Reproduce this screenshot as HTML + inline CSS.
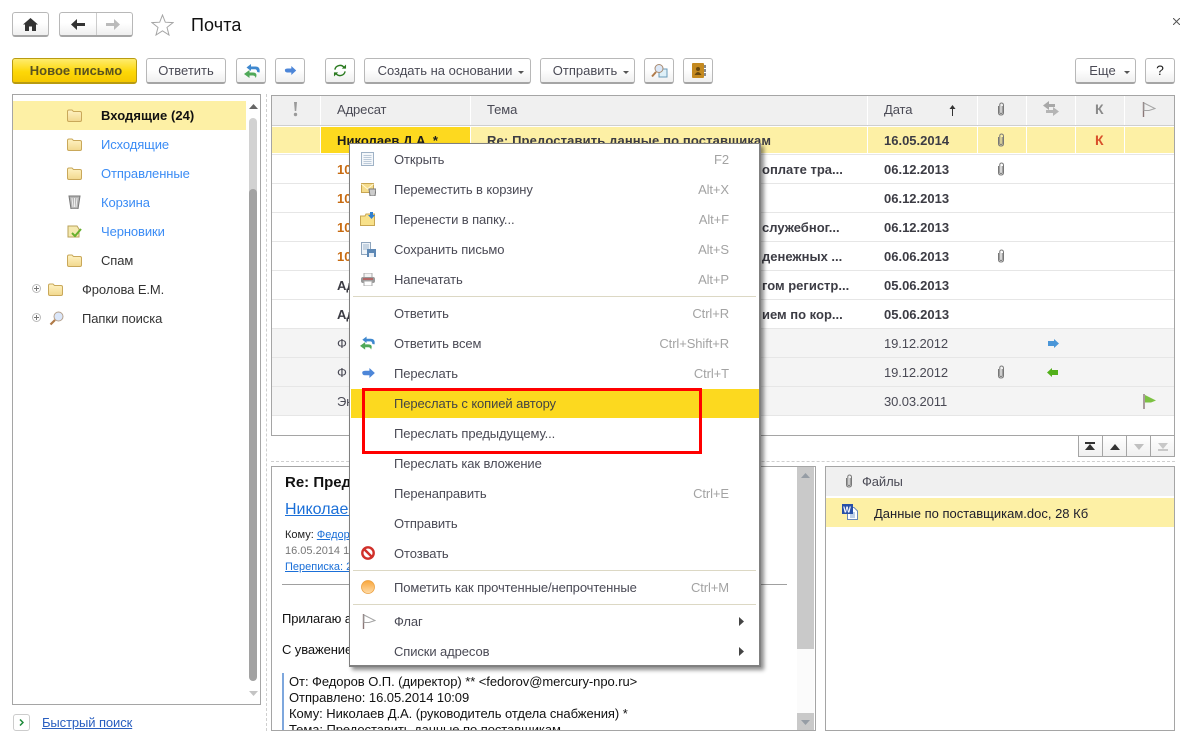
<!DOCTYPE html>
<html lang="ru"><head><meta charset="utf-8"><title>Почта</title>
<style>
html,body{margin:0;padding:0;background:#fff}
body{position:relative;width:1194px;height:743px;overflow:hidden;font:13px/16px "Liberation Sans",Arial,sans-serif;color:#4a4a55}
.a,.t{position:absolute}
.t{white-space:nowrap;letter-spacing:-.1px;margin-top:1px}
.b{position:absolute;box-sizing:border-box;height:26px;border:1px solid #b8b8b8;border-bottom:2px solid #a5a5a5;border-radius:3px;background:linear-gradient(#fff 0,#fff 45%,#efefef 100%);text-align:center;line-height:23px;white-space:nowrap}
.b svg{position:absolute;left:6px;top:3px}
.dd{position:absolute;width:0;height:0;border:3px solid transparent;border-top:3px solid #555;border-bottom:0}
.hc{position:absolute;top:96px;height:29px;background:#f0f0f0}
.r1{position:absolute;top:127px;height:26px;background:#fdf0a5}
.rl{position:absolute;left:272px;width:902px;height:1px;background:#e6e6e6}
.g{position:absolute;left:272px;width:902px;height:28px;background:#f4f4f4}
.d{font-weight:bold;color:#3c3c44;letter-spacing:0}
.o{font-weight:bold;color:#c76a10;letter-spacing:0}
.m{position:absolute;left:394px}
.s{position:absolute;right:465px;color:#a3a3a3}
.sep{position:absolute;left:353px;width:403px;height:1px;background:#dcd8c4}
.lnk{color:#1a6fd8;text-decoration:underline}
.ic{position:absolute}
</style></head><body>
<svg width="0" height="0" style="position:absolute">
<defs>
<linearGradient id="fg" x1="0" y1="0" x2="0" y2="1"><stop offset="0" stop-color="#fff3c4"/><stop offset="1" stop-color="#f2d88e"/></linearGradient>
<linearGradient id="og" x1="0" y1="0" x2="0" y2="1"><stop offset="0" stop-color="#f8a53a"/><stop offset="1" stop-color="#ffdca8"/></linearGradient>
<symbol id="folder" viewBox="0 0 15 13"><path d="M.5 2.500Q.5 1 2 1H5L6.500 2.500H13Q14.500 2.500 14.500 4V11Q14.500 12.500 13 12.500H2Q.5 12.500 .5 11Z" fill="url(#fg)" stroke="#c9a85a"/></symbol>
<symbol id="clip" viewBox="0 0 8 14"><path d="M1.500 4V10.500Q1.500 13 4 13T6.500 10.500V3.500Q6.500 1 4.500 1T2.800 3.500V10.500Q2.800 11.500 4 11.500T5.200 10.500V4" fill="none" stroke="#777" stroke-width="1"/></symbol>
<symbol id="replyall" viewBox="0 0 16 14"><path d="M7 0L2.500 3.500 7 7V5.200H11Q13 5.200 13.200 8L15.500 8.500Q16.500 2.500 11.500 2.500H7Z" fill="#3f88cf"/><path d="M5.500 6L0 10 5.500 14V11.500H9Q11 11.500 11.800 14 14 8.500 9 8.500H5.500Z" fill="#4fa858"/></symbol>
<symbol id="fwd" viewBox="0 0 14 11"><path d="M8 0L14 5.500 8 11V8H3Q0 8 0 4.500 1 3 3.500 3H8Z" fill="#4d86d8"/></symbol>
<symbol id="flag" viewBox="0 0 14 15"><path d="M1.500 0V15" stroke="#8b7777" stroke-width="1.400"/><path d="M2 1L13 6.500 7 8.500H2Z" fill="none" stroke="#a5a5a5"/></symbol>
</defs>
</svg>

<!-- top bar -->
<div class="b" style="left:12px;top:12px;width:37px;height:25px"></div>
<svg class="ic" style="left:23px;top:18px" width="15" height="13" viewBox="0 0 15 13"><path d="M7.500 0L15 6.500H13V13H9V8.500H6V13H2V6.500H0Z" fill="#333"/></svg>
<div class="b" style="left:59px;top:12px;width:74px;height:25px"></div>
<div class="a" style="left:96px;top:13px;width:1px;height:22px;background:#ccc"></div>
<svg class="ic" style="left:71px;top:19px" width="14" height="11" viewBox="0 0 14 11"><path d="M6 0L0 5.500 6 11V7H14V4H6Z" fill="#333"/></svg>
<svg class="ic" style="left:106px;top:19px" width="14" height="11" viewBox="0 0 14 11"><path d="M8 0L14 5.500 8 11V7H0V4H8Z" fill="#bbb"/></svg>
<svg class="ic" style="left:151px;top:14px" width="23" height="22" viewBox="0 0 23 22"><path d="M11.500 1L14.300 8.200 22 8.600 16 13.400 18 21 11.500 16.800 5 21 7 13.400 1 8.600 8.700 8.200Z" fill="none" stroke="#a5a5a5" stroke-width="1"/></svg>
<div class="t" style="left:191px;top:13px;font-size:18px;line-height:22px;color:#111;letter-spacing:.1px">Почта</div>
<svg class="ic" style="left:1173px;top:18px" width="7" height="7" viewBox="0 0 7 7"><path d="M0 0L7 7M7 0L0 7" stroke="#555" stroke-width="1"/></svg>

<!-- toolbar -->
<div class="b" style="left:12px;top:58px;width:125px;padding-left:3px;border-color:#b89b12;background:linear-gradient(#ffec6e,#fdd808 55%,#f5c800);font-weight:bold;color:#5a5220">Новое письмо</div>
<div class="b" style="left:146px;top:58px;width:80px">Ответить</div>
<div class="b" style="left:236px;top:58px;width:30px"><svg style="left:7px;top:5px" width="16" height="14"><use href="#replyall"/></svg></div>
<div class="b" style="left:275px;top:58px;width:30px"><svg style="left:8px;top:7px" width="13" height="9" viewBox="0 0 14 11"><use href="#fwd"/></svg></div>
<div class="b" style="left:325px;top:58px;width:30px"><svg style="left:7px;top:5px" width="14" height="13" viewBox="0 0 15 14"><path d="M2 6A5.500 5.500 0 0 1 12 4M13 8A5.500 5.500 0 0 1 3 10" fill="none" stroke="#2a7a20" stroke-width="1.500"/><path d="M9.500 5H14V.5ZM5.500 9H1V13.500Z" fill="#2a7a20"/></svg></div>
<div class="b" style="left:364px;top:58px;width:167px;padding-right:5px">Создать на основании</div><div class="dd" style="left:518px;top:71px"></div>
<div class="b" style="left:540px;top:58px;width:95px;padding-right:5px">Отправить</div><div class="dd" style="left:623px;top:71px"></div>
<div class="b" style="left:1075px;top:58px;width:61px;padding-right:6px">Еще</div><div class="dd" style="left:1124px;top:71px"></div>
<div class="b" style="left:644px;top:58px;width:30px"><svg style="left:6px;top:4px" width="17" height="15" viewBox="0 0 17 15"><rect x="8" y="6" width="8" height="8" fill="#dff0f8" stroke="#6a9ab8"/><circle cx="8" cy="5.500" r="4" fill="#dbe8f8" stroke="#a88a70"/><path d="M5 9L1 13.500" stroke="#b07a48" stroke-width="2"/></svg></div>
<div class="b" style="left:683px;top:58px;width:30px"><svg style="left:7px;top:4px" width="15" height="15" viewBox="0 0 15 15"><rect x="1" y="0" width="12" height="15" rx="1" fill="#c58a20"/><rect x="13" y="2" width="2" height="3" fill="#888"/><rect x="13" y="6" width="2" height="3" fill="#888"/><rect x="13" y="10" width="2" height="3" fill="#888"/><circle cx="7" cy="6" r="2" fill="#6a4a10"/><path d="M3.500 12Q7 6 10.500 12Z" fill="#6a4a10"/></svg></div>
<div class="b" style="left:1145px;top:58px;width:30px;color:#222;font-size:14px">?</div>

<!-- left panel -->
<div class="a" style="left:12px;top:94px;width:249px;height:611px;box-sizing:border-box;border:1px solid #a5a5a5"></div>
<div class="a" style="left:13px;top:101px;width:233px;height:29px;background:#fdf0a5"></div>
<svg class="ic" style="left:249px;top:104px" width="9" height="5" viewBox="0 0 9 5"><path d="M4.500 0L9 5H0Z" fill="#666"/></svg>
<div class="a" style="left:249px;top:118px;width:8px;height:80px;background:#d2d2d2;border-radius:4px"></div>
<div class="a" style="left:249px;top:189px;width:8px;height:492px;background:#a2a2a2;border-radius:4px"></div>
<svg class="ic" style="left:249px;top:691px" width="9" height="5" viewBox="0 0 9 5"><path d="M0 0H9L4.500 5Z" fill="#c4c4c4"/></svg>
<svg class="ic" style="left:67px;top:109px" width="15" height="13"><use href="#folder"/></svg>
<svg class="ic" style="left:67px;top:138px" width="15" height="13"><use href="#folder"/></svg>
<svg class="ic" style="left:67px;top:167px" width="15" height="13"><use href="#folder"/></svg>
<svg class="ic" style="left:68px;top:195px" width="13" height="14" viewBox="0 0 13 14"><path d="M1 1H12L10 14H3Z" fill="#b5b5b5" stroke="#777"/><path d="M4 3L5 12M6.500 3V12M9 3L8 12" stroke="#eee"/></svg>
<svg class="ic" style="left:67px;top:224px" width="15" height="14" viewBox="0 0 15 14"><path d="M1 2H10L12 5V13H1Z" fill="#f5e9b0" stroke="#b9a25a"/><path d="M5 9L8 12 14 5" fill="none" stroke="#67b02e" stroke-width="2"/></svg>
<svg class="ic" style="left:67px;top:254px" width="15" height="13"><use href="#folder"/></svg>
<div class="t" style="left:101px;top:107px;font-weight:bold;color:#111;letter-spacing:.05px">Входящие (24)</div>
<div class="t" style="left:101px;top:136px;color:#3b8cf5">Исходящие</div>
<div class="t" style="left:101px;top:165px;color:#3b8cf5">Отправленные</div>
<div class="t" style="left:101px;top:194px;color:#3b8cf5">Корзина</div>
<div class="t" style="left:101px;top:223px;color:#3b8cf5">Черновики</div>
<div class="t" style="left:101px;top:252px;color:#333">Спам</div>
<svg class="ic" style="left:32px;top:284px" width="9" height="9" viewBox="0 0 9 9"><circle cx="4.500" cy="4.500" r="4" fill="#fff" stroke="#bbb"/><path d="M2 4.500H7M4.500 2V7" stroke="#777"/></svg>
<svg class="ic" style="left:32px;top:313px" width="9" height="9" viewBox="0 0 9 9"><circle cx="4.500" cy="4.500" r="4" fill="#fff" stroke="#bbb"/><path d="M2 4.500H7M4.500 2V7" stroke="#777"/></svg>
<svg class="ic" style="left:48px;top:283px" width="15" height="13"><use href="#folder"/></svg>
<svg class="ic" style="left:49px;top:311px" width="15" height="15" viewBox="0 0 15 15"><circle cx="9.500" cy="5.500" r="4.500" fill="#dbe7fa" stroke="#b5a08c"/><path d="M6 9L1.500 13.500" stroke="#b07a48" stroke-width="2.200"/></svg>
<div class="t" style="left:82px;top:281px;color:#333">Фролова Е.М.</div>
<div class="t" style="left:82px;top:310px;color:#333">Папки поиска</div>
<div class="b" style="left:13px;top:714px;width:17px;height:17px;border:1px solid #ccc;border-radius:3px;background:#fff"></div>
<svg class="ic" style="left:19px;top:719px" width="5" height="7" viewBox="0 0 5 7"><path d="M1 .5L4 3.500 1 6.500" fill="none" stroke="#1d8a3a" stroke-width="1.500"/></svg>
<div class="t lnk" style="left:42px;top:714px;color:#2a5fc0">Быстрый поиск</div>

<!-- splitters -->
<div class="a" style="left:266px;top:94px;height:637px;border-left:1px dashed #cfcfcf"></div>
<div class="a" style="left:271px;top:461px;width:904px;border-top:1px dashed #cfcfcf"></div>

<!-- table -->
<div class="a" style="left:271px;top:95px;width:904px;height:341px;box-sizing:border-box;border:1px solid #a5a5a5"></div>
<div class="hc" style="left:272px;width:48px"></div>
<div class="hc" style="left:321px;width:149px"></div>
<div class="hc" style="left:471px;width:396px"></div>
<div class="hc" style="left:868px;width:109px"></div>
<div class="hc" style="left:978px;width:48px"></div>
<div class="hc" style="left:1027px;width:48px"></div>
<div class="hc" style="left:1076px;width:48px"></div>
<div class="hc" style="left:1125px;width:49px"></div>
<div class="a" style="left:272px;top:125px;width:902px;height:1px;background:#cfcfcf"></div>
<div class="r1" style="left:272px;width:48px"></div>
<div class="r1" style="left:321px;width:149px;background:#fdd91f"></div>
<div class="r1" style="left:471px;width:396px"></div>
<div class="r1" style="left:868px;width:109px"></div>
<div class="r1" style="left:978px;width:48px"></div>
<div class="r1" style="left:1027px;width:48px"></div>
<div class="r1" style="left:1076px;width:48px"></div>
<div class="r1" style="left:1125px;width:49px"></div>
<div class="g" style="top:329px"></div><div class="g" style="top:358px"></div><div class="g" style="top:387px"></div>
<div class="rl" style="top:154px"></div><div class="rl" style="top:183px"></div><div class="rl" style="top:212px"></div><div class="rl" style="top:241px"></div><div class="rl" style="top:270px"></div><div class="rl" style="top:299px"></div><div class="rl" style="top:328px"></div><div class="rl" style="top:357px"></div><div class="rl" style="top:386px"></div><div class="rl" style="top:415px"></div>

<div class="t" style="left:337px;top:101px">Адресат</div>
<div class="t" style="left:487px;top:101px">Тема</div>
<div class="t" style="left:884px;top:101px">Дата</div>
<svg class="ic" style="left:293px;top:102px" width="5" height="15" viewBox="0 0 5 15"><path d="M1 0H4L3.200 9H1.800Z" fill="#9a9a9a"/><circle cx="2.500" cy="12.500" r="1.700" fill="#9a9a9a"/></svg>
<svg class="ic" style="left:949px;top:105px" width="7" height="11" viewBox="0 0 7 11"><path d="M3.500 11V2" stroke="#333"/><path d="M3.500 0L6.500 4H.5Z" fill="#333"/></svg>
<svg class="ic" style="left:997px;top:102px" width="8" height="14"><use href="#clip"/></svg>
<svg class="ic" style="left:1043px;top:101px" width="16" height="15" viewBox="0 0 16 15"><path d="M6 0V3H12V6H6V9L0 4.500Z" fill="#a8a8a8"/><path d="M10 6V9H3V12H10V15L16 10.500Z" fill="#b5b5b5"/></svg>
<div class="t" style="left:1095px;top:100px;font-weight:bold;font-size:14px;color:#8a8a8a">К</div>
<svg class="ic" style="left:1142px;top:102px" width="14" height="15"><use href="#flag"/></svg>

<div class="t" style="left:337px;top:132px;font-weight:bold;color:#1c1c1c;letter-spacing:.05px">Николаев Д.А. *</div>
<div class="t d" style="left:487px;top:132px;letter-spacing:.13px">Re: Предоставить данные по поставщикам</div>
<div class="t d" style="left:884px;top:132px">16.05.2014</div>
<svg class="ic" style="left:997px;top:133px" width="8" height="14"><use href="#clip"/></svg>
<div class="t" style="left:1095px;top:131px;font-weight:bold;font-size:14px;color:#d9502a">К</div>

<div class="t o" style="left:337px;top:161px">10</div><div class="t o" style="left:337px;top:190px">10</div><div class="t o" style="left:337px;top:219px">10</div><div class="t o" style="left:337px;top:248px">10</div>
<div class="t d" style="left:337px;top:277px">Ад</div><div class="t d" style="left:337px;top:306px">Ад</div>
<div class="t" style="left:337px;top:335px">Ф</div><div class="t" style="left:337px;top:364px">Ф</div><div class="t" style="left:337px;top:393px">Эк</div>
<div class="t d" style="left:762px;top:161px">оплате тра...</div>
<div class="t d" style="left:762px;top:219px">служебног...</div>
<div class="t d" style="left:762px;top:248px">денежных ...</div>
<div class="t d" style="left:762px;top:277px">гом регистр...</div>
<div class="t d" style="left:762px;top:306px">ием по кор...</div>
<div class="t d" style="left:884px;top:161px">06.12.2013</div>
<div class="t d" style="left:884px;top:190px">06.12.2013</div>
<div class="t d" style="left:884px;top:219px">06.12.2013</div>
<div class="t d" style="left:884px;top:248px">06.06.2013</div>
<div class="t d" style="left:884px;top:277px">05.06.2013</div>
<div class="t d" style="left:884px;top:306px">05.06.2013</div>
<div class="t" style="left:884px;top:335px">19.12.2012</div>
<div class="t" style="left:884px;top:364px">19.12.2012</div>
<div class="t" style="left:884px;top:393px">30.03.2011</div>
<svg class="ic" style="left:997px;top:162px" width="8" height="14"><use href="#clip"/></svg>
<svg class="ic" style="left:997px;top:249px" width="8" height="14"><use href="#clip"/></svg>
<svg class="ic" style="left:997px;top:365px" width="8" height="14"><use href="#clip"/></svg>
<svg class="ic" style="left:1048px;top:339px" width="11" height="9" viewBox="0 0 11 9"><path d="M0 2H6V0L11 4.500 6 9V7H0Z" fill="#4a96d8"/></svg>
<svg class="ic" style="left:1047px;top:368px" width="11" height="9" viewBox="0 0 11 9"><path d="M11 2H5V0L0 4.500 5 9V7H11Z" fill="#52b01a"/></svg>
<svg class="ic" style="left:1143px;top:394px" width="14" height="15" viewBox="0 0 14 15"><path d="M1 0V15" stroke="#8b7777" stroke-width="1.400"/><path d="M2 1L13 6.500 8 8.500H2Z" fill="#7cc142"/></svg>

<!-- pagination -->
<div class="a" style="left:1078px;top:436px;width:97px;height:21px;box-sizing:border-box;border:1px solid #a5a5a5;border-top:0;background:linear-gradient(#fff,#f0f0f0)"></div>
<div class="a" style="left:1102px;top:436px;width:1px;height:20px;background:#a5a5a5"></div>
<div class="a" style="left:1126px;top:436px;width:1px;height:20px;background:#a5a5a5"></div>
<div class="a" style="left:1150px;top:436px;width:1px;height:20px;background:#a5a5a5"></div>
<svg class="ic" style="left:1085px;top:442px" width="10" height="8" viewBox="0 0 10 8"><path d="M0 0H10V2H0ZM5 2L10 8H0Z" fill="#333"/></svg>
<svg class="ic" style="left:1110px;top:444px" width="10" height="6" viewBox="0 0 10 6"><path d="M5 0L10 6H0Z" fill="#333"/></svg>
<svg class="ic" style="left:1134px;top:444px" width="10" height="6" viewBox="0 0 10 6"><path d="M0 0H10L5 6Z" fill="#c0c0c0"/></svg>
<svg class="ic" style="left:1158px;top:443px" width="10" height="8" viewBox="0 0 10 8"><path d="M0 0H10L5 6ZM0 6H10V8H0Z" fill="#c8c8c8"/></svg>

<!-- preview -->
<div class="a" style="left:271px;top:466px;width:545px;height:265px;box-sizing:border-box;border:1px solid #a5a5a5"></div>
<div class="a" style="left:797px;top:467px;width:17px;height:182px;background:#c9c9c9"></div>
<div class="a" style="left:797px;top:649px;width:17px;height:64px;background:#fbfbfb"></div>
<div class="a" style="left:797px;top:713px;width:17px;height:17px;background:#c9c9c9"></div>
<svg class="ic" style="left:801px;top:473px" width="9" height="5" viewBox="0 0 9 5"><path d="M4.500 0L9 5H0Z" fill="#969da5"/></svg>
<svg class="ic" style="left:801px;top:720px" width="9" height="5" viewBox="0 0 9 5"><path d="M0 0H9L4.500 5Z" fill="#969da5"/></svg>
<div class="t" style="left:285px;top:474px;font-size:15px;font-weight:bold;color:#111;letter-spacing:0">Re: Предоставить данные</div>
<div class="t lnk" style="left:285px;top:500px;font-size:16px;line-height:18px;letter-spacing:0">Николаев Д.А.</div>
<div class="t" style="left:285px;top:527px;font-size:11px;line-height:14px;color:#222;letter-spacing:0">Кому: <span class="lnk">Федоров О.П.</span></div>
<div class="t" style="left:285px;top:543px;font-size:11px;line-height:14px;color:#777;letter-spacing:0">16.05.2014 10:09</div>
<div class="t lnk" style="left:285px;top:559px;font-size:11px;line-height:14px;letter-spacing:0">Переписка: 2</div>
<div class="a" style="left:282px;top:584px;width:505px;height:1px;background:#a0a0a0"></div>
<div class="t" style="left:282px;top:610px;color:#111">Прилагаю актуальные</div>
<div class="t" style="left:282px;top:641px;color:#111">С уважением</div>
<div class="a" style="left:282px;top:673px;width:2px;height:57px;background:#7ea7dd"></div>
<div class="a" style="left:289px;top:673px;width:500px;height:57px;overflow:hidden;color:#111;letter-spacing:-.06px;white-space:nowrap"><div style="margin-top:1px">От: Федоров О.П. (директор) ** &lt;fedorov@mercury-npo.ru&gt;<br>Отправлено: 16.05.2014 10:09<br>Кому: Николаев Д.А. (руководитель отдела снабжения) *<br>Тема: Предоставить данные по поставщикам</div></div>

<!-- files -->
<div class="a" style="left:825px;top:466px;width:350px;height:265px;box-sizing:border-box;border:1px solid #a5a5a5"></div>
<div class="a" style="left:826px;top:467px;width:348px;height:29px;background:#f0f0f0"></div>
<div class="a" style="left:826px;top:498px;width:348px;height:29px;background:#fdf0a5"></div>
<svg class="ic" style="left:845px;top:474px" width="8" height="14"><use href="#clip"/></svg>
<div class="t" style="left:862px;top:473px">Файлы</div>
<svg class="ic" style="left:842px;top:504px" width="16" height="16" viewBox="0 0 16 16"><path d="M5.500 3.500H12L15.500 7V15.500H5.500Z" fill="#fff" stroke="#6a88b8"/><path d="M8 9H13M8 11H13M8 13H13" stroke="#7fa0d0"/><rect x="0" y="0" width="11" height="10" fill="#2850a8"/><text x="1.200" y="8.300" font-size="8" font-weight="bold" fill="#fff" font-family="Liberation Sans">W</text></svg>
<div class="t" style="left:874px;top:505px;color:#1c1c2a;letter-spacing:0">Данные по поставщикам.doc, 28 Кб</div>

<!-- context menu -->
<div class="a" style="left:349px;top:143px;width:412px;height:524px;box-sizing:border-box;background:#fff;border:2px solid #808080;border-top-width:1px;border-left-width:1px;box-shadow:3px 3px 4px rgba(0,0,0,.45)"></div>
<div class="a" style="left:351px;top:389px;width:408px;height:29px;background:#fcd91f"></div>
<div class="sep" style="top:296px"></div><div class="sep" style="top:570px"></div><div class="sep" style="top:604px"></div>

<svg class="ic" style="left:361px;top:152px" width="13" height="14" viewBox="0 0 13 14"><rect x=".5" y=".5" width="12" height="13" fill="#f4f7fa" stroke="#9fb2c6"/><path d="M2.500 3.500H10.500M2.500 5.500H10.500M2.500 7.500H10.500M2.500 9.500H10.500M2.500 11.500H10.500" stroke="#bccad9"/></svg>
<svg class="ic" style="left:361px;top:183px" width="15" height="13" viewBox="0 0 15 13"><rect x=".5" y=".5" width="12" height="9" fill="#f5dc8c" stroke="#c8a652"/><path d="M.5 1L6.500 6 12.500 1" fill="none" stroke="#fff8d8"/><path d="M8 6H15L14 13H9Z" fill="#ccc" stroke="#777"/></svg>
<svg class="ic" style="left:360px;top:212px" width="15" height="14" viewBox="0 0 15 14"><path d="M.5 4H5L6 2H14.500V13.500H.5Z" fill="#f8e18a" stroke="#c8a652"/><path d="M10 0H13V3H15L11.500 7 8 3H10Z" fill="#2f7fd0"/></svg>
<svg class="ic" style="left:361px;top:242px" width="15" height="15" viewBox="0 0 15 15"><rect x=".5" y=".5" width="9" height="12" fill="#eef3f8" stroke="#8fa5bd"/><path d="M2 3H8M2 5H8M2 7H8" stroke="#9db4cc"/><rect x="6" y="7" width="9" height="8" fill="#5d88b5"/><rect x="8" y="11" width="5" height="4" fill="#e8eef5"/></svg>
<svg class="ic" style="left:361px;top:273px" width="14" height="13" viewBox="0 0 14 13"><rect x="3" y="0" width="8" height="5" fill="#f3f3f3" stroke="#aaa"/><rect x="0" y="4" width="14" height="6" rx="2" fill="#999"/><rect x="3" y="8" width="8" height="5" fill="#fff" stroke="#aaa"/><path d="M2 6H12" stroke="#c33"/></svg>
<svg class="ic" style="left:360px;top:336px" width="15" height="14"><use href="#replyall"/></svg>
<svg class="ic" style="left:362px;top:368px" width="13" height="10" viewBox="0 0 14 11"><use href="#fwd"/></svg>
<svg class="ic" style="left:361px;top:546px" width="14" height="14" viewBox="0 0 14 14"><circle cx="7" cy="7" r="5.700" fill="#fff" stroke="#d0302a" stroke-width="2.400"/><path d="M3 3L11 11" stroke="#d0302a" stroke-width="2.400"/></svg>
<svg class="ic" style="left:361px;top:580px" width="14" height="14" viewBox="0 0 14 14"><circle cx="7" cy="7" r="6.500" fill="url(#og)" stroke="#eba040" stroke-width=".8"/></svg>
<svg class="ic" style="left:362px;top:614px" width="14" height="15"><use href="#flag"/></svg>

<div class="t m" style="top:151px">Открыть</div><div class="t s" style="top:151px">F2</div>
<div class="t m" style="top:181px">Переместить в корзину</div><div class="t s" style="top:181px">Alt+X</div>
<div class="t m" style="top:211px">Перенести в папку...</div><div class="t s" style="top:211px">Alt+F</div>
<div class="t m" style="top:241px">Сохранить письмо</div><div class="t s" style="top:241px">Alt+S</div>
<div class="t m" style="top:271px">Напечатать</div><div class="t s" style="top:271px">Alt+P</div>
<div class="t m" style="top:305px">Ответить</div><div class="t s" style="top:305px">Ctrl+R</div>
<div class="t m" style="top:335px">Ответить всем</div><div class="t s" style="top:335px">Ctrl+Shift+R</div>
<div class="t m" style="top:365px">Переслать</div><div class="t s" style="top:365px">Ctrl+T</div>
<div class="t m" style="top:395px;color:#444">Переслать с копией автору</div>
<div class="t m" style="top:425px">Переслать предыдущему...</div>
<div class="t m" style="top:455px">Переслать как вложение</div>
<div class="t m" style="top:485px">Перенаправить</div><div class="t s" style="top:485px">Ctrl+E</div>
<div class="t m" style="top:515px">Отправить</div>
<div class="t m" style="top:545px">Отозвать</div>
<div class="t m" style="top:579px">Пометить как прочтенные/непрочтенные</div><div class="t s" style="top:579px">Ctrl+M</div>
<div class="t m" style="top:613px">Флаг</div>
<div class="t m" style="top:643px">Списки адресов</div>
<svg class="ic" style="left:739px;top:617px" width="5" height="9" viewBox="0 0 5 9"><path d="M0 0L5 4.500 0 9Z" fill="#444"/></svg>
<svg class="ic" style="left:739px;top:647px" width="5" height="9" viewBox="0 0 5 9"><path d="M0 0L5 4.500 0 9Z" fill="#444"/></svg>

<!-- red annotation -->
<div class="a" style="left:362px;top:388px;width:340px;height:66px;box-sizing:border-box;border:3px solid #f00"></div>
</body></html>
